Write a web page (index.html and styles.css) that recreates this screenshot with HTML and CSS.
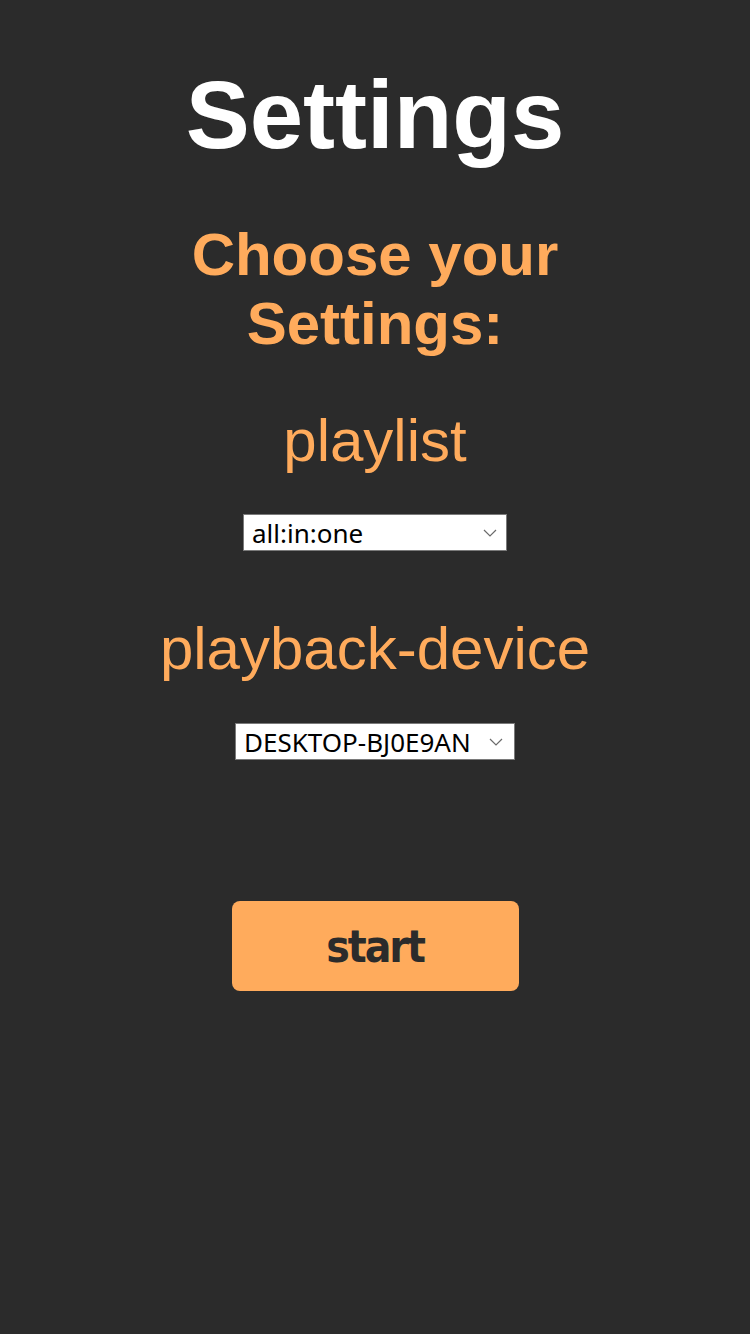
FILE: index.html
```html
<!DOCTYPE html>
<html lang="en">
<head>
<meta charset="utf-8">
<title>Settings</title>
<link rel="stylesheet" href="styles.css">
</head>
<body>
<main class="page">
  <h1 class="title">Settings</h1>
  <h2 class="subtitle">Choose your<br>Settings:</h2>

  <label class="label label-playlist" for="playlist">playlist</label>
  <div class="select select-playlist">
    <select id="playlist">
      <option>all:in:one</option>
    </select>
    <svg class="chevron" width="14" height="8" viewBox="0 0 14 8"><path d="M1 1 L7 7 L13 1" fill="none" stroke="#6b6b6b" stroke-width="1.2"/></svg>
  </div>

  <label class="label label-device" for="device">playback-device</label>
  <div class="select select-device">
    <select id="device">
      <option>DESKTOP-BJ0E9AN</option>
    </select>
    <svg class="chevron" width="14" height="8" viewBox="0 0 14 8"><path d="M1 1 L7 7 L13 1" fill="none" stroke="#6b6b6b" stroke-width="1.2"/></svg>
  </div>

  <button class="start" type="button">start</button>
</main>
</body>
</html>
```
FILE: styles.css
```css
html, body {
  margin: 0;
  padding: 0;
  background: #2b2b2b;
}

.page {
  display: flex;
  flex-direction: column;
  align-items: center;
  min-height: 1334px;
  font-family: "Liberation Sans", Arial, sans-serif;
}

.title {
  margin: 60px 0 0;
  font-size: 96px;
  line-height: 110px;
  font-weight: bold;
  color: #ffffff;
  text-align: center;
}

.subtitle {
  margin: 50px 0 0;
  font-size: 60px;
  line-height: 69px;
  font-weight: bold;
  color: #ffab5c;
  text-align: center;
}

.label {
  display: block;
  font-size: 60px;
  line-height: 69px;
  font-weight: normal;
  color: #ffab5c;
  text-align: center;
}

.label-playlist {
  margin-top: 48px;
}

.label-device {
  margin-top: 63px;
}

.select {
  display: flex;
  align-items: center;
  box-sizing: border-box;
  height: 37px;
  margin-top: 39px;
  background: #ffffff;
  border: 1px solid #7a7a7a;
  padding-right: 9px;
}

.select-playlist {
  width: 264px;
}

.select-device {
  width: 280px;
  margin-top: 40px;
  padding-right: 11px;
}

.select select {
  flex: 1;
  min-width: 0;
  height: 100%;
  -webkit-appearance: none;
  appearance: none;
  border: none;
  outline: none;
  background: transparent;
  padding: 0 0 0 8px;
  margin: 0;
  font-family: "Noto Sans", "Open Sans", sans-serif;
  font-size: 26px;
  color: #000000;
}

.chevron {
  flex: none;
}

.start {
  margin-top: 141px;
  width: 287px;
  height: 90px;
  border: none;
  border-radius: 8px;
  background: #ffab5c;
  color: #2b2b2b;
  font-family: "DejaVu Sans", Verdana, sans-serif;
  font-stretch: condensed;
  font-weight: bold;
  font-size: 44px;
  letter-spacing: -2px;
  padding: 0;
}
```
